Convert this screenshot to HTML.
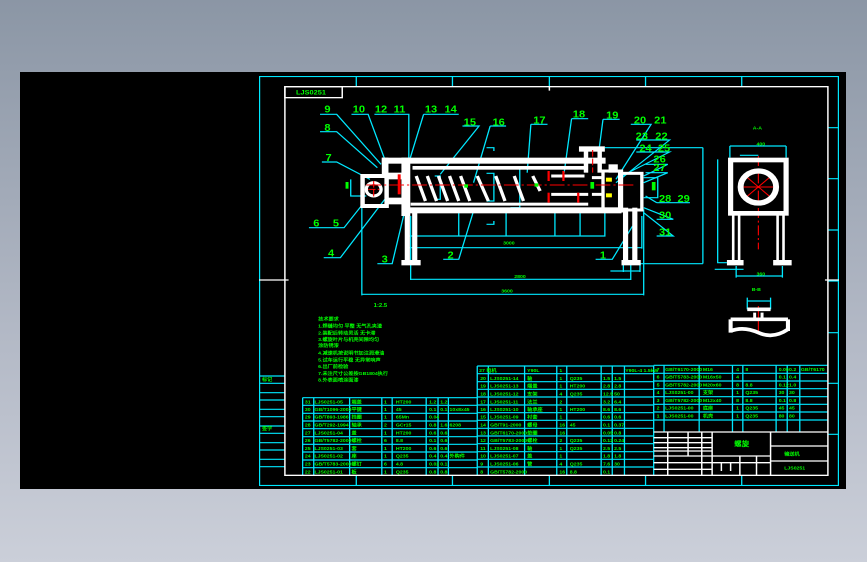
<!DOCTYPE html>
<html><head><meta charset="utf-8"><style>
html,body{margin:0;padding:0;width:867px;height:562px;overflow:hidden;background:linear-gradient(#8b96a5,#b3b9c6 60%,#cbcfd9);}
#blk{position:absolute;left:20px;top:72px;width:826px;height:417px;background:#000;}
svg{position:absolute;left:259px;top:76px;}
text{font-family:"Liberation Sans",sans-serif;fill:#00ff00;font-weight:bold;}
</style></head><body>
<div id="blk"></div>
<svg width="580" height="410" viewBox="0 0 1568 1230" preserveAspectRatio="none">
<g fill="none" stroke="#00e8ff" stroke-width="3.5">
<rect x="1.5" y="1.5" width="1565" height="1227"/>
<path d="M263 0V30M523 0V30M785 0V30M1045 0V30M1305 0V30M263 1198V1230M523 1198V1230M785 1198V1230M1045 1198V1230M1305 1198V1230"/>
<path d="M1538 155H1568M1538 308H1568M1538 462H1568M1538 615H1568M1538 770H1568M1538 922H1568M1538 1075H1568"/>
<path d="M0 900H70M0 922H70M0 950H70M0 972H70M0 1000H70M0 1022H70M0 1050H70M0 1072H70M0 1100H70M0 1122H70M0 1150H70M0 1172H70"/>
<path d="M165 115H210L330 265M250 115H295L340 250M312 115H360M360 115H405V255M445 115H540M445 115L405 260M550 150H595L490 295M625 150H668M625 150L580 320M735 145H780M735 145L725 290M845 128H890M845 128L825 290M930 130H975M930 130L920 215M1005 145H1060L965 310M1020 192H1110L965 320M1020 228H1110L980 300M1045 265H1105L1040 300M1045 290H1105L1040 320M165 167H210L320 275M170 258H210L300 310M135 455H230L280 385M175 545H220L340 370M320 563H360L395 400M498 550H540L580 405M910 550H955L1010 450M1075 380H1165M1075 380L1045 360M1075 430H1120L1040 395M1075 480H1120L1040 410"/>
<path d="M278 655H1040M278 360V658M1040 400V658M410 610H1005M410 420V612M1005 560V612M400 515H1035M400 420V518M1035 420V518M400 480H935M540 400V482M668 400V482M800 400V482M868 400V482M935 400V482M1200 215V563M1030 563H1200M935 215H1200M1040 305H1078V365H1040M248 310V360H290M950 585H1030M985 560V588M1030 565V588"/>
<path d="M1273 210H1425M1273 210V245M1425 210V245M1240 250V560H1265M1290 600H1415M1290 570V605M1415 570V605M1232 580H1310M1320 675H1383M1320 665V700M1383 665V700M1300 238H1350"/>
<path d="M615 215H635V225M615 445H635V435M680 278H705V395H680M615 292H635V375H615M475 300H490V370H475"/>
<path d="M118 965H590M118 988H590M118 1012H590M118 1035H590M118 1058H590M118 1082H590M118 1105H590M118 1128H590M118 1152H590M118 1175H590M118 965V1198M148 965V1198M245 965V1198M332 965V1198M360 965V1198M452 965V1198M484 965V1198M512 965V1198"/>
<path d="M590 870H1067M590 893H1067M590 917H1067M590 940H1067M590 963H1067M590 987H1067M590 1010H1067M590 1033H1067M590 1057H1067M590 1080H1067M590 1103H1067M590 1127H1067M590 1150H1067M590 1173H1067M590 870V1198M620 870V1198M718 870V1198M805 870V1198M832 870V1198M925 870V1198M955 870V1198M988 870V1198M1067 868V1198"/>
<path d="M1067 868H1538M1067 892H1538M1067 915H1538M1067 938H1538M1067 962H1538M1067 985H1538M1067 1008H1538M1067 1032H1538M1095 868V1068M1190 868V1068M1280 868V1068M1308 868V1068M1398 868V1068M1428 868V1068M1462 868V1068"/>
</g>
<g fill="none" stroke="#fff" stroke-width="4">
<rect x="70" y="32" width="1468" height="1166"/>
<rect x="70" y="32" width="155" height="33"/>
<path d="M0 612H80M1530 612H1568M785 32V44"/>
<path d="M1067 1068H1538M1067 1085H1225M1067 1100H1225M1067 1115H1225M1067 1125H1225M1067 1140H1225M1067 1160H1225M1067 1180H1225M1105 1068V1198M1160 1068V1140M1197 1068V1198M1225 1068V1198M1383 1068V1198M1225 1140H1383M1225 1160H1383M1383 1110H1538M1383 1155H1538M1300 1140V1198M1345 1140V1198M1250 1160V1185M1275 1160V1185"/>
</g>
<g fill="#fff">
<rect x="332" y="245" width="605" height="18"/>
<rect x="415" y="270" width="470" height="11"/>
<rect x="390" y="394" width="590" height="18"/>
<rect x="410" y="380" width="480" height="9"/>
<rect x="332" y="245" width="18" height="60"/>
<rect x="385" y="245" width="24" height="175"/>
<rect x="394" y="410" width="14" height="145"/>
<rect x="414" y="410" width="14" height="145"/>
<rect x="385" y="552" width="52" height="16"/>
<rect x="984" y="395" width="14" height="160"/>
<rect x="1009" y="395" width="14" height="160"/>
<rect x="980" y="552" width="52" height="16"/>
<rect x="878" y="215" width="12" height="75"/>
<rect x="915" y="215" width="12" height="75"/>
<rect x="865" y="211" width="70" height="16"/>
<rect x="280" y="300" width="65" height="90" fill="none" stroke="#fff" stroke-width="12"/>
<rect x="340" y="290" width="50" height="20"/>
<rect x="340" y="365" width="50" height="20"/>
<rect x="930" y="285" width="50" height="120" fill="none" stroke="#fff" stroke-width="9"/>
<rect x="975" y="292" width="60" height="110" fill="none" stroke="#fff" stroke-width="9"/>
<rect x="945" y="265" width="25" height="25"/>
</g>
<g stroke="#fff" stroke-width="9" fill="none">
<path d="M425 300L450 375M455 300L480 375M485 300L510 375M515 300L540 375M545 300L570 375M590 300L620 375M640 300L665 375M690 300L715 375M740 300L760 345"/>
<path d="M790 300H880M790 355H890M900 305H930M900 355H930"/>
<circle cx="310" cy="340" r="20"/>
</g>
<g fill="#ff0000">
<rect x="375" y="295" width="8" height="60"/><rect x="780" y="285" width="6" height="30"/><rect x="820" y="285" width="6" height="30"/><rect x="780" y="350" width="6" height="30"/><rect x="860" y="350" width="6" height="30"/>
</g>
<g stroke="#ff0000" stroke-width="3" fill="none">
<path d="M290 327H1020" stroke-dasharray="40 8 6 8"/>
<path d="M310 315V365M295 340H325M902 222V290" stroke-dasharray="20 6"/>
<path d="M1350 240V520" stroke-dasharray="30 8 6 8"/>
<path d="M1300 333H1400M1310 295L1390 370M1390 295L1310 370"/>
<path d="M1350 690V770"/>
</g>
<g fill="#ffff00"><rect x="938" y="305" width="16" height="12"/><rect x="938" y="352" width="16" height="12"/></g>
<g fill="#00ff00"><rect x="896" y="318" width="10" height="20"/><rect x="1062" y="318" width="10" height="25"/><rect x="234" y="318" width="8" height="20"/><rect x="555" y="325" width="10" height="10"/><rect x="745" y="322" width="10" height="10"/></g>
<g fill="none" stroke="#fff">
<rect x="1275" y="252" width="150" height="160" stroke-width="14"/>
<circle cx="1350" cy="333" r="48" stroke-width="16"/>
<path d="M1282 410V555M1298 410V555M1402 410V555M1418 410V555" stroke-width="7"/>
<path d="M1265 560H1310M1390 560H1440" stroke-width="16"/>
<path d="M1320 700H1383M1275 730H1430M1275 730V770M1430 730V765M1275 765Q1310 750 1350 770T1430 760" stroke-width="11"/>
<path d="M1340 710V725M1360 710V725" stroke-width="8"/>
</g>
<g font-size="30" fill="#00ff00" text-anchor="middle" font-weight="normal">
<text x="185" y="110">9</text><text x="270" y="110">10</text><text x="330" y="110">12</text><text x="380" y="110">11</text><text x="465" y="110">13</text><text x="518" y="110">14</text>
<text x="570" y="148">15</text><text x="648" y="148">16</text><text x="758" y="142">17</text><text x="865" y="125">18</text><text x="955" y="128">19</text>
<text x="1030" y="142">20</text><text x="1085" y="142">21</text><text x="1035" y="190">23</text><text x="1088" y="190">22</text><text x="1045" y="226">24</text><text x="1095" y="226">25</text>
<text x="1083" y="260">26</text><text x="1083" y="285">27</text><text x="1098" y="378">28</text><text x="1148" y="378">29</text><text x="1098" y="428">30</text><text x="1098" y="478">31</text>
<text x="185" y="165">8</text><text x="188" y="255">7</text><text x="155" y="452">6</text><text x="208" y="452">5</text><text x="195" y="542">4</text><text x="340" y="560">3</text><text x="518" y="548">2</text><text x="930" y="548">1</text>
</g>
<g font-size="14" fill="#00ff00">
<text x="100" y="55" font-size="20">LJS0251</text>
<text x="1335" y="160">A-A</text><text x="1332" y="645">B-B</text><text x="310" y="693" font-size="16">1:2.5</text>
<text x="160" y="733">技术要求</text><text x="160" y="755">1.焊缝均匀 平整 无气孔夹渣</text><text x="160" y="776">2.装配后转动灵活 无卡滞</text><text x="160" y="795">3.螺旋叶片与机壳间隙均匀</text><text x="160" y="813">涂防锈漆</text>
<text x="160" y="835">4.减速机按说明书加注润滑油</text><text x="160" y="856">5.试车运行平稳 无异常响声</text><text x="160" y="876">6.出厂前检验</text><text x="160" y="897">7.未注尺寸公差按GB1804执行</text><text x="160" y="917">8.外表面喷涂面漆</text>
<text x="660" y="505">3000</text><text x="690" y="606">2800</text><text x="655" y="650">3600</text><text x="1345" y="208">400</text><text x="1345" y="598">360</text>
<text x="8" y="915">标记</text><text x="8" y="1062">签字</text><text x="1285" y="1110" font-size="20">螺旋</text><text x="1420" y="1138">输送机</text><text x="1420" y="1180">LJS0251</text>
</g>
<g font-size="14" fill="#00ff00">
<text x="595" y="888">27 电机</text><text x="625" y="912">LJS0251-14</text><text x="625" y="935">LJS0251-13</text><text x="625" y="958">LJS0251-12</text><text x="625" y="982">LJS0251-11</text><text x="625" y="1005">LJS0251-10</text><text x="625" y="1028">LJS0251-09</text><text x="625" y="1052">GB/T91-2000</text><text x="625" y="1075">GB/T6170-2000</text><text x="625" y="1098">GB/T5783-2000</text><text x="625" y="1122">LJS0251-08</text><text x="625" y="1145">LJS0251-07</text><text x="625" y="1168">LJS0251-06</text><text x="625" y="1192">GB/T5782-2000</text>
<text x="598" y="912">20</text><text x="598" y="935">19</text><text x="598" y="958">18</text><text x="598" y="982">17</text><text x="598" y="1005">16</text><text x="598" y="1028">15</text><text x="598" y="1052">14</text><text x="598" y="1075">13</text><text x="598" y="1098">12</text><text x="598" y="1122">11</text><text x="598" y="1145">10</text><text x="598" y="1168">9</text><text x="598" y="1192">8</text>
<text x="150" y="982">LJS0251-05</text><text x="150" y="1005">GB/T1096-2003</text><text x="150" y="1028">GB/T893-1986</text><text x="150" y="1052">GB/T292-1994</text><text x="150" y="1075">LJS0251-04</text><text x="150" y="1098">GB/T5782-2000</text><text x="150" y="1122">LJS0251-03</text><text x="150" y="1145">LJS0251-02</text><text x="150" y="1168">GB/T5783-2000</text><text x="150" y="1192">LJS0251-01</text>
<text x="124" y="982">31</text><text x="124" y="1005">30</text><text x="124" y="1028">29</text><text x="124" y="1052">28</text><text x="124" y="1075">27</text><text x="124" y="1098">26</text><text x="124" y="1122">25</text><text x="124" y="1145">24</text><text x="124" y="1168">23</text><text x="124" y="1192">22</text>
<text x="1098" y="885">GB/T6170-2000</text><text x="1098" y="908">GB/T5783-2000</text><text x="1098" y="931">GB/T5782-2000</text><text x="1098" y="954">LJS0251-00</text><text x="1098" y="978">GB/T5782-2000</text><text x="1098" y="1001">LJS0251-00</text><text x="1098" y="1024">LJS0251-00</text>
<text x="1075" y="885">7</text><text x="1075" y="908">6</text><text x="1075" y="931">5</text><text x="1075" y="954">4</text><text x="1075" y="978">3</text><text x="1075" y="1001">2</text><text x="1075" y="1024">1</text>
<text x="725" y="888">Y90L</text><text x="725" y="912">轴</text><text x="725" y="935">端盖</text><text x="725" y="958">支架</text><text x="725" y="982">法兰</text><text x="725" y="1005">轴承座</text><text x="725" y="1028">衬套</text><text x="725" y="1052">螺母</text><text x="725" y="1075">垫圈</text><text x="725" y="1098">螺栓</text><text x="725" y="1122">轴</text><text x="725" y="1145">盖</text><text x="725" y="1168">管</text>
<text x="812" y="888">1</text><text x="812" y="912">1</text><text x="812" y="935">1</text><text x="812" y="958">4</text><text x="812" y="982">2</text><text x="812" y="1005">1</text><text x="812" y="1028">1</text><text x="812" y="1052">16</text><text x="812" y="1075">16</text><text x="812" y="1098">2</text><text x="812" y="1122">1</text><text x="812" y="1145">1</text><text x="812" y="1168">4</text><text x="812" y="1192">16</text>
<text x="840" y="912">Q235</text><text x="840" y="935">HT200</text><text x="840" y="958">Q235</text><text x="840" y="1005">HT200</text><text x="840" y="1052">45</text><text x="840" y="1098">Q235</text><text x="840" y="1122">Q235</text><text x="840" y="1168">Q235</text><text x="840" y="1192">8.8</text>
<text x="930" y="912">1.5</text><text x="930" y="935">2.8</text><text x="930" y="958">12.5</text><text x="930" y="982">3.2</text><text x="930" y="1005">8.6</text><text x="930" y="1028">0.6</text><text x="930" y="1052">0.1</text><text x="930" y="1075">0.05</text><text x="930" y="1098">0.12</text><text x="930" y="1122">2.5</text><text x="930" y="1145">1.8</text><text x="930" y="1168">7.6</text><text x="930" y="1192">0.1</text>
<text x="960" y="912">1.5</text><text x="960" y="935">2.8</text><text x="960" y="958">50</text><text x="960" y="982">6.4</text><text x="960" y="1005">8.6</text><text x="960" y="1028">0.6</text><text x="960" y="1052">0.37</text><text x="960" y="1075">0.8</text><text x="960" y="1098">0.24</text><text x="960" y="1122">2.5</text><text x="960" y="1145">1.8</text><text x="960" y="1168">30</text><text x="990" y="888">Y90L-4 1.5kW</text>
<text x="250" y="982">端盖</text><text x="250" y="1005">平键</text><text x="250" y="1028">挡圈</text><text x="250" y="1052">轴承</text><text x="250" y="1075">盖</text><text x="250" y="1098">螺栓</text><text x="250" y="1122">套</text><text x="250" y="1145">座</text><text x="250" y="1168">螺钉</text><text x="250" y="1192">板</text>
<text x="338" y="982">1</text><text x="338" y="1005">1</text><text x="338" y="1028">1</text><text x="338" y="1052">2</text><text x="338" y="1075">1</text><text x="338" y="1098">6</text><text x="338" y="1122">1</text><text x="338" y="1145">1</text><text x="338" y="1168">6</text><text x="338" y="1192">1</text>
<text x="370" y="982">HT200</text><text x="370" y="1005">45</text><text x="370" y="1028">65Mn</text><text x="370" y="1052">GCr15</text><text x="370" y="1075">HT200</text><text x="370" y="1098">8.8</text><text x="370" y="1122">HT200</text><text x="370" y="1145">Q235</text><text x="370" y="1168">4.8</text><text x="370" y="1192">Q235</text>
<text x="460" y="982">1.2</text><text x="460" y="1005">0.1</text><text x="460" y="1028">0.04</text><text x="460" y="1052">0.8</text><text x="460" y="1075">0.6</text><text x="460" y="1098">0.1</text><text x="460" y="1122">0.6</text><text x="460" y="1145">0.4</text><text x="460" y="1168">0.02</text><text x="460" y="1192">0.8</text>
<text x="490" y="982">1.2</text><text x="490" y="1005">0.1</text><text x="490" y="1052">1.6</text><text x="490" y="1075">0.6</text><text x="490" y="1098">0.6</text><text x="490" y="1122">0.6</text><text x="490" y="1145">0.4</text><text x="490" y="1168">0.1</text><text x="490" y="1192">0.8</text>
<text x="515" y="1005">10x8x45</text><text x="515" y="1052">6208</text><text x="515" y="1145">外购件</text>
<text x="1200" y="885">M16</text><text x="1200" y="908">M16x50</text><text x="1200" y="931">M20x60</text><text x="1200" y="954">支架</text><text x="1200" y="978">M12x40</text><text x="1200" y="1001">底座</text><text x="1200" y="1024">机壳</text>
<text x="1290" y="885">4</text><text x="1290" y="908">4</text><text x="1290" y="931">8</text><text x="1290" y="954">1</text><text x="1290" y="978">8</text><text x="1290" y="1001">1</text><text x="1290" y="1024">1</text>
<text x="1315" y="885">8</text><text x="1315" y="931">8.8</text><text x="1315" y="954">Q235</text><text x="1315" y="978">8.8</text><text x="1315" y="1001">Q235</text><text x="1315" y="1024">Q235</text>
<text x="1405" y="885">0.05</text><text x="1405" y="908">0.1</text><text x="1405" y="931">0.12</text><text x="1405" y="954">30</text><text x="1405" y="978">0.1</text><text x="1405" y="1001">45</text><text x="1405" y="1024">80</text>
<text x="1433" y="885">0.2</text><text x="1433" y="908">0.4</text><text x="1433" y="931">1.0</text><text x="1433" y="954">30</text><text x="1433" y="978">0.8</text><text x="1433" y="1001">45</text><text x="1433" y="1024">80</text><text x="1465" y="885">GB/T6170</text>
</g>
</svg>
</body></html>
